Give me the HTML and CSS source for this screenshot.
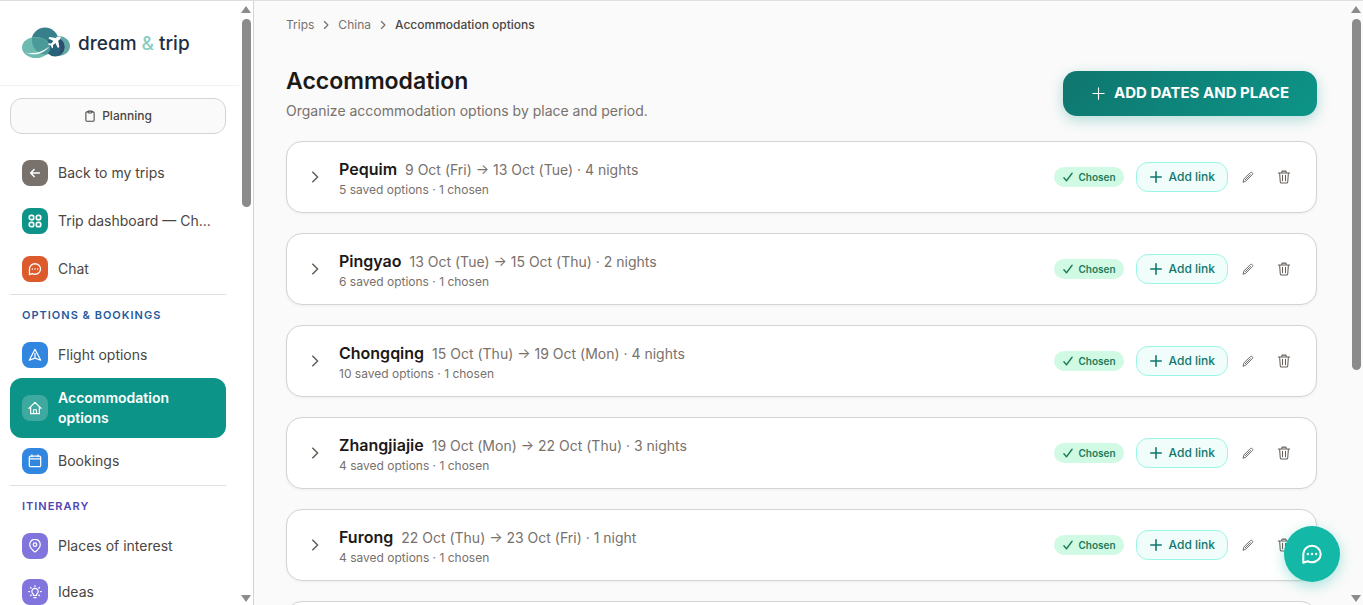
FILE: index.html
```html
<!DOCTYPE html>
<html lang="en">
<head>
    <meta charset="UTF-8">
    <meta name="viewport" content="width=device-width, initial-scale=1.0">
    <title>Accommodation options - dream &amp; trip</title>
    <link rel="stylesheet" href="styles.css">
</head>
<body>
    <!-- Icon sprite -->
    <svg class="sprite" aria-hidden="true">
        <symbol id="i-clipboard" viewBox="0 0 16 16"><path d="M5 2.500H4A1.500 1.500 0 0 0 2.500 4v9.500A1.500 1.500 0 0 0 4 15h8a1.500 1.500 0 0 0 1.500-1.500V4A1.500 1.500 0 0 0 12 2.500h-1M5.500 1.500h5v1a1.500 1.500 0 0 1-1.500 1.500H7a1.500 1.500 0 0 1-1.500-1.500z"/></symbol>
        <symbol id="i-back" viewBox="0 0 16 16"><path d="M13 8H3M7 4 3 8l4 4" stroke-width="1.800"/></symbol>
        <symbol id="i-grid" viewBox="0 0 16 16"><g stroke-width="1.900"><rect x="1.500" y="1.500" width="5" height="5" rx="2"/><rect x="9.500" y="1.500" width="5" height="5" rx="2"/><rect x="1.500" y="9.500" width="5" height="5" rx="2"/><rect x="9.500" y="9.500" width="5" height="5" rx="2"/></g></symbol>
        <symbol id="i-chat" viewBox="0 0 24 24"><path d="M2.500 21.500V12a9.500 9 0 1 1 9.500 9c-1.800 0-3.300-.4-4.700-1.100z" stroke-width="2.200"/><path d="M7.500 12h.01M12 12h.01M16.500 12h.01" stroke-width="2.600"/></symbol>
        <symbol id="i-flight" viewBox="0 0 16 16"><path d="M8 1.500 14.500 14 8 11.500 1.500 14zM8 6v5.500"/></symbol>
        <symbol id="i-home" viewBox="0 0 16 16"><path d="M1 8.500 8 1.500l7 7M3 7v7.500h10V7M6.300 14.500V10h3.400v4.500"/></symbol>
        <symbol id="i-calendar" viewBox="0 0 16 16"><path d="M4.500 1v2M11.500 1v2M1.500 5.500h13"/><rect x="1.500" y="2.500" width="13" height="12" rx="1.500"/></symbol>
        <symbol id="i-pin" viewBox="0 0 16 16"><path d="M8 15s6-4.600 6-8.700A6 6 0 0 0 2 6.300C2 10.400 8 15 8 15z"/><circle cx="8" cy="6.500" r="2"/></symbol>
        <symbol id="i-bulb" viewBox="0 0 16 16"><path d="M6.200 12v-1.500a3.600 3.600 0 1 1 3.600 0V12zM6.800 14.500h2.400M8 .8v1M.8 7.500h1M14.200 7.500h1M2.800 2.800l.8.800M13.200 2.800l-.8.800M2.800 12.200l.8-.8M13.200 12.200l-.8-.8"/></symbol>
        <symbol id="i-chevron" viewBox="0 0 16 16"><path d="m5.500 2.500 5.500 5.500-5.500 5.500"/></symbol>
        <symbol id="i-plus" viewBox="0 0 16 16"><path d="M8 2v12M2 8h12"/></symbol>
        <symbol id="i-check" viewBox="0 0 16 16"><path d="m2.500 9 3.500 4 7.500-10"/></symbol>
        <symbol id="i-pencil" viewBox="0 0 16 16"><path d="m1.500 14.500 1.200-4.200 8.600-8.200a1.500 1.500 0 0 1 2.100 0l.5.500a1.500 1.500 0 0 1 0 2.100l-8.500 8.500zM4.500 11.500l6.800-6.600"/></symbol>
        <symbol id="i-trash" viewBox="0 0 16 16"><path d="M1.500 3.500h13M5.500 3.500V2.200A.9.900 0 0 1 6.400 1.300h3.200a.9.900 0 0 1 .9.900v1.300M3 3.500l.7 9.800A1.500 1.500 0 0 0 5.200 14.800h5.600a1.500 1.500 0 0 0 1.500-1.500l.7-9.800M6.300 6v6.300M9.700 6v6.300"/></symbol>
    </svg>

    <div class="app">
        <!-- Sidebar -->
        <aside class="sidebar">
            <div class="sidebar-content">
                <a class="brand" href="#">
                    <svg class="brand-logo" viewBox="0 0 48 32" aria-hidden="true">
                        <circle cx="23" cy="14" r="13.500" fill="#37808b"/>
                        <ellipse cx="37" cy="19" rx="11" ry="10" fill="#62a9a6"/>
                        <ellipse cx="33" cy="20" rx="9.500" ry="9.500" fill="#28627b"/>
                        <path d="M32 10.500a9.500 9.500 0 0 1 4.500 18.300C40 24 38 15 32 10.500z" fill="#2c4f6d"/>
                        <ellipse cx="14" cy="20.500" rx="14" ry="10.500" fill="#6dbbb0"/>
                        <path d="M10 11c8-2 18 2 18 9.500 0 3-1.500 5-4 7C15 27 9 20 10 11z" fill="#4b9a9a"/>
                        <path d="M3.500 25.500c9 1.800 17-.5 24-6.300C22 26.500 13 29.500 3.500 25.500z" fill="#fff"/>
                        <path d="M38.500 10c1 1-1 2.700-2.200 3.800l1 6.200-1.400 1-2.600-4.900-2.400 2.200.2 2.300-1.100.9-1.100-3-2.900-1.100.9-1.100 2.300.2 2.200-2.400-4.900-2.600 1-1.400 6.200 1c1.100-1.200 3.800-2.200 4.800-1.100z" fill="#fff"/>
                    </svg>
                    <span class="brand-name">dream <em>&amp;</em> trip</span>
                </a>

                <button class="mode-btn" type="button"><svg class="icon"><use href="#i-clipboard"/></svg>Planning</button>

                <nav class="nav">
                    <div class="nav-group nav-top">
                        <a class="nav-item" href="#"><span class="nav-icon gray"><svg class="icon"><use href="#i-back"/></svg></span><span class="nav-text">Back to my trips</span></a>
                        <a class="nav-item" href="#"><span class="nav-icon teal"><svg class="icon"><use href="#i-grid"/></svg></span><span class="nav-text">Trip dashboard — Ch...</span></a>
                        <a class="nav-item" href="#"><span class="nav-icon orange"><svg class="icon"><use href="#i-chat"/></svg></span><span class="nav-text">Chat</span></a>
                    </div>
                    <div class="nav-group">
                        <h2 class="nav-label blue-text">Options &amp; Bookings</h2>
                        <a class="nav-item" href="#"><span class="nav-icon blue"><svg class="icon"><use href="#i-flight"/></svg></span><span class="nav-text">Flight options</span></a>
                        <a class="nav-item active" href="#"><span class="nav-icon"><svg class="icon"><use href="#i-home"/></svg></span><span class="nav-text">Accommodation options</span></a>
                        <a class="nav-item" href="#"><span class="nav-icon blue"><svg class="icon"><use href="#i-calendar"/></svg></span><span class="nav-text">Bookings</span></a>
                    </div>
                    <div class="nav-group">
                        <h2 class="nav-label purple-text">Itinerary</h2>
                        <a class="nav-item" href="#"><span class="nav-icon purple"><svg class="icon"><use href="#i-pin"/></svg></span><span class="nav-text">Places of interest</span></a>
                        <a class="nav-item" href="#"><span class="nav-icon purple"><svg class="icon"><use href="#i-bulb"/></svg></span><span class="nav-text">Ideas</span></a>
                    </div>
                </nav>
            </div>
            <div class="scrollbar short" aria-hidden="true">
                <span class="arrow up"></span>
                <span class="track"><span class="thumb"></span></span>
                <span class="arrow down"></span>
            </div>
        </aside>

        <!-- Main content -->
        <main class="main">
            <nav class="breadcrumb">
                <a href="#">Trips</a>
                <svg class="icon"><use href="#i-chevron"/></svg>
                <a href="#">China</a>
                <svg class="icon"><use href="#i-chevron"/></svg>
                <span class="current">Accommodation options</span>
            </nav>

            <header class="page-header">
                <div>
                    <h1>Accommodation</h1>
                    <p class="subtitle">Organize accommodation options by place and period.</p>
                </div>
                <button class="add-btn" type="button"><svg class="icon"><use href="#i-plus"/></svg>Add dates and place</button>
            </header>

            <div class="stays">
                <article class="stay">
                    <button class="toggle" type="button" aria-label="Expand"><svg class="icon"><use href="#i-chevron"/></svg></button>
                    <div class="stay-info">
                        <div class="stay-line"><h3>Pequim</h3><span class="dates">9 Oct (Fri) → 13 Oct (Tue) · 4 nights</span></div>
                        <p class="summary">5 saved options · 1 chosen</p>
                    </div>
                    <span class="badge"><svg class="icon"><use href="#i-check"/></svg>Chosen</span>
                    <button class="link-btn" type="button"><svg class="icon"><use href="#i-plus"/></svg>Add link</button>
                    <button class="icon-btn edit" type="button" aria-label="Edit"><svg class="icon"><use href="#i-pencil"/></svg></button>
                    <button class="icon-btn" type="button" aria-label="Delete"><svg class="icon"><use href="#i-trash"/></svg></button>
                </article>

                <article class="stay">
                    <button class="toggle" type="button" aria-label="Expand"><svg class="icon"><use href="#i-chevron"/></svg></button>
                    <div class="stay-info">
                        <div class="stay-line"><h3>Pingyao</h3><span class="dates">13 Oct (Tue) → 15 Oct (Thu) · 2 nights</span></div>
                        <p class="summary">6 saved options · 1 chosen</p>
                    </div>
                    <span class="badge"><svg class="icon"><use href="#i-check"/></svg>Chosen</span>
                    <button class="link-btn" type="button"><svg class="icon"><use href="#i-plus"/></svg>Add link</button>
                    <button class="icon-btn edit" type="button" aria-label="Edit"><svg class="icon"><use href="#i-pencil"/></svg></button>
                    <button class="icon-btn" type="button" aria-label="Delete"><svg class="icon"><use href="#i-trash"/></svg></button>
                </article>

                <article class="stay">
                    <button class="toggle" type="button" aria-label="Expand"><svg class="icon"><use href="#i-chevron"/></svg></button>
                    <div class="stay-info">
                        <div class="stay-line"><h3>Chongqing</h3><span class="dates">15 Oct (Thu) → 19 Oct (Mon) · 4 nights</span></div>
                        <p class="summary">10 saved options · 1 chosen</p>
                    </div>
                    <span class="badge"><svg class="icon"><use href="#i-check"/></svg>Chosen</span>
                    <button class="link-btn" type="button"><svg class="icon"><use href="#i-plus"/></svg>Add link</button>
                    <button class="icon-btn edit" type="button" aria-label="Edit"><svg class="icon"><use href="#i-pencil"/></svg></button>
                    <button class="icon-btn" type="button" aria-label="Delete"><svg class="icon"><use href="#i-trash"/></svg></button>
                </article>

                <article class="stay">
                    <button class="toggle" type="button" aria-label="Expand"><svg class="icon"><use href="#i-chevron"/></svg></button>
                    <div class="stay-info">
                        <div class="stay-line"><h3>Zhangjiajie</h3><span class="dates">19 Oct (Mon) → 22 Oct (Thu) · 3 nights</span></div>
                        <p class="summary">4 saved options · 1 chosen</p>
                    </div>
                    <span class="badge"><svg class="icon"><use href="#i-check"/></svg>Chosen</span>
                    <button class="link-btn" type="button"><svg class="icon"><use href="#i-plus"/></svg>Add link</button>
                    <button class="icon-btn edit" type="button" aria-label="Edit"><svg class="icon"><use href="#i-pencil"/></svg></button>
                    <button class="icon-btn" type="button" aria-label="Delete"><svg class="icon"><use href="#i-trash"/></svg></button>
                </article>

                <article class="stay">
                    <button class="toggle" type="button" aria-label="Expand"><svg class="icon"><use href="#i-chevron"/></svg></button>
                    <div class="stay-info">
                        <div class="stay-line"><h3>Furong</h3><span class="dates">22 Oct (Thu) → 23 Oct (Fri) · 1 night</span></div>
                        <p class="summary">4 saved options · 1 chosen</p>
                    </div>
                    <span class="badge"><svg class="icon"><use href="#i-check"/></svg>Chosen</span>
                    <button class="link-btn" type="button"><svg class="icon"><use href="#i-plus"/></svg>Add link</button>
                    <button class="icon-btn edit" type="button" aria-label="Edit"><svg class="icon"><use href="#i-pencil"/></svg></button>
                    <button class="icon-btn" type="button" aria-label="Delete"><svg class="icon"><use href="#i-trash"/></svg></button>
                </article>

                <article class="stay"></article>
            </div>
        </main>

        <div class="scrollbar" aria-hidden="true">
            <span class="arrow up"></span>
            <span class="track"><span class="thumb"></span></span>
            <span class="arrow down"></span>
        </div>
    </div>

    <button class="chat-fab" type="button" aria-label="Open chat"><svg class="icon"><use href="#i-chat"/></svg></button>
</body>
</html>
```

FILE: styles.css
```css
:root {
    --teal: #0d9488;
    --teal-dark: #0f766e;
    --bg: #fafafa;
    --line: #d6d3d1;
    --text: #1c1917;
    --text-mid: #4a4642;
    --muted: #78716c;
}

* {
    box-sizing: border-box;
    margin: 0;
    padding: 0;
}

body {
    font-family: Inter, "Liberation Sans", sans-serif;
    font-size: 14px;
    line-height: 20px;
    color: var(--text);
    background: var(--bg);
    overflow: hidden;
}

a {
    color: inherit;
    text-decoration: none;
}

button {
    font: inherit;
    cursor: pointer;
}

.sprite {
    display: none;
}

.icon {
    width: 14px;
    height: 14px;
    flex: none;
    fill: none;
    stroke: currentColor;
    stroke-width: 1.4;
    stroke-linecap: round;
    stroke-linejoin: round;
}

.app {
    display: flex;
    height: 100vh;
    border-top: 1px solid #dedede;
}

/* Sidebar */
.sidebar {
    display: flex;
    flex: none;
    width: 254px;
    background: #fff;
    border-right: 1px solid var(--line);
}

.sidebar-content {
    flex: 1;
    min-width: 0;
    overflow: hidden;
}

.brand {
    display: flex;
    align-items: center;
    gap: 8px;
    height: 85px;
    padding-left: 22px;
    border-bottom: 1px solid #f1f1f0;
}

.brand-logo {
    width: 48px;
    height: 32px;
}

.brand-name {
    padding-top: 2px;
    font-size: 19px;
    font-weight: 500;
    font-feature-settings: "cv11";
    color: #1e2f45;
}

.brand-name em {
    font-style: normal;
    color: #8accc0;
}

.mode-btn {
    display: flex;
    align-items: center;
    justify-content: center;
    gap: 6px;
    width: 216px;
    height: 36px;
    margin: 12px 10px 16px;
    font-size: 12px;
    font-weight: 500;
    color: var(--text-mid);
    background: var(--bg);
    border: 1px solid var(--line);
    border-radius: 12px;
}

.mode-btn .icon {
    width: 12px;
    height: 12px;
}

.nav {
    padding: 0 13px 0 10px;
}

.nav-group {
    padding-bottom: 1px;
}

.nav-group + .nav-group {
    border-top: 1px solid #e2e0de;
}

.nav-top {
    display: flex;
    flex-direction: column;
    gap: 2px;
    padding-bottom: 2px;
}

.nav-label {
    padding: 10px 12px 7px;
    font-size: 11px;
    font-weight: 600;
    letter-spacing: 1px;
    text-transform: uppercase;
}

.blue-text {
    color: #285a9e;
}

.purple-text {
    color: #4f46b5;
}

.nav-item {
    display: flex;
    align-items: center;
    gap: 10px;
    min-height: 46px;
    padding: 10px 12px;
    color: var(--text-mid);
    border-radius: 12px;
}

.nav-text {
    white-space: nowrap;
}

.nav-icon {
    display: flex;
    flex: none;
    align-items: center;
    justify-content: center;
    width: 26px;
    height: 26px;
    color: #fff;
    background: rgba(255, 255, 255, 0.2);
    border-radius: 8px;
}

.gray { background: #78716c; }
.teal { background: var(--teal); }
.orange { background: #dc5a2b; }
.blue { background: #3187e0; }
.purple { background: #8175dd; }

.nav-item.active {
    font-weight: 600;
    color: #fff;
    background: var(--teal);
}

.nav-item.active .nav-text {
    white-space: normal;
}

/* Scrollbars */
.scrollbar {
    display: flex;
    flex: none;
    flex-direction: column;
    align-items: center;
    width: 14px;
    padding: 5px 0 3px;
}

.arrow {
    border: 5px solid transparent;
}

.arrow.up {
    border-top: 0;
    border-bottom: 7px solid #8b8b8b;
}

.arrow.down {
    border-bottom: 0;
    border-top: 7px solid #8b8b8b;
}

.track {
    flex: 1;
    width: 9px;
    padding: 6px 0;
}

.thumb {
    display: block;
    height: 61.5%;
    background: #8b8b8b;
    border-radius: 5px;
}

.short .thumb {
    height: 33%;
}

/* Main */
.main {
    flex: 1;
    min-width: 0;
    padding: 14px 32px 0;
    overflow: hidden;
}

.breadcrumb {
    display: flex;
    align-items: center;
    gap: 7px;
    font-size: 12px;
    color: var(--muted);
}

.breadcrumb .icon {
    width: 10px;
    height: 10px;
    stroke-width: 2;
}

.breadcrumb .current {
    font-weight: 500;
    color: var(--text-mid);
}

.page-header {
    display: flex;
    align-items: center;
    justify-content: space-between;
    margin: 30px 0 20px;
}

h1 {
    font-size: 23px;
    font-weight: 600;
    line-height: 32px;
}

.subtitle {
    margin-top: 4px;
    color: var(--muted);
}

.add-btn {
    display: flex;
    align-items: center;
    gap: 8px;
    height: 45px;
    padding: 0 28px;
    font-size: 15px;
    font-weight: 700;
    text-transform: uppercase;
    color: #fff;
    background: linear-gradient(135deg, var(--teal-dark), var(--teal));
    border: 0;
    border-radius: 14px;
    box-shadow: 0 4px 14px rgba(13, 148, 136, 0.3);
}

.add-btn .icon {
    width: 15px;
    height: 15px;
    stroke-width: 1.2;
}

.stays {
    display: flex;
    flex-direction: column;
    gap: 20px;
}

.stay {
    display: flex;
    align-items: center;
    gap: 4px;
    min-height: 72px;
    padding: 0 16px;
    background: #fff;
    border: 1px solid var(--line);
    border-radius: 16px;
    box-shadow: 0 1px 3px rgba(0, 0, 0, 0.05);
}

.toggle,
.icon-btn {
    display: flex;
    align-items: center;
    justify-content: center;
    width: 32px;
    height: 32px;
    color: #66605b;
    background: none;
    border: 0;
}

.toggle {
    width: 24px;
}

.toggle .icon {
    stroke-width: 1.8;
}

.icon-btn .icon {
    stroke-width: 1.2;
}

.edit .icon {
    width: 12px;
    height: 12px;
}

.stay-info {
    flex: 1;
    padding: 1px 0 0 8px;
}

.stay-line {
    display: flex;
    align-items: baseline;
    gap: 8px;
}

.stay h3 {
    font-size: 16px;
    font-weight: 600;
    line-height: 24px;
}

.dates {
    color: var(--muted);
}

.summary {
    font-size: 12px;
    line-height: 18px;
    color: var(--muted);
}

.badge {
    display: flex;
    align-items: center;
    gap: 4px;
    height: 20px;
    margin-right: 8px;
    padding: 0 8px;
    font-size: 10px;
    font-weight: 600;
    color: #1c7a58;
    background: #d1fae5;
    border-radius: 10px;
}

.badge .icon {
    width: 12px;
    height: 12px;
    stroke-width: 1.8;
}

.link-btn {
    display: flex;
    align-items: center;
    gap: 6px;
    height: 30px;
    padding: 0 12px;
    font-size: 12px;
    font-weight: 500;
    color: var(--teal-dark);
    background: #f0fdfa;
    border: 1px solid #99f6e4;
    border-radius: 12px;
}

.link-btn .icon {
    stroke-width: 1.8;
}

.chat-fab {
    position: fixed;
    right: 23px;
    bottom: 23px;
    display: flex;
    align-items: center;
    justify-content: center;
    width: 56px;
    height: 56px;
    color: #fff;
    background: #14b8a6;
    border: 0;
    border-radius: 50%;
    box-shadow: 0 4px 14px rgba(20, 184, 166, 0.35);
}

.chat-fab .icon {
    width: 22px;
    height: 22px;
}
```
